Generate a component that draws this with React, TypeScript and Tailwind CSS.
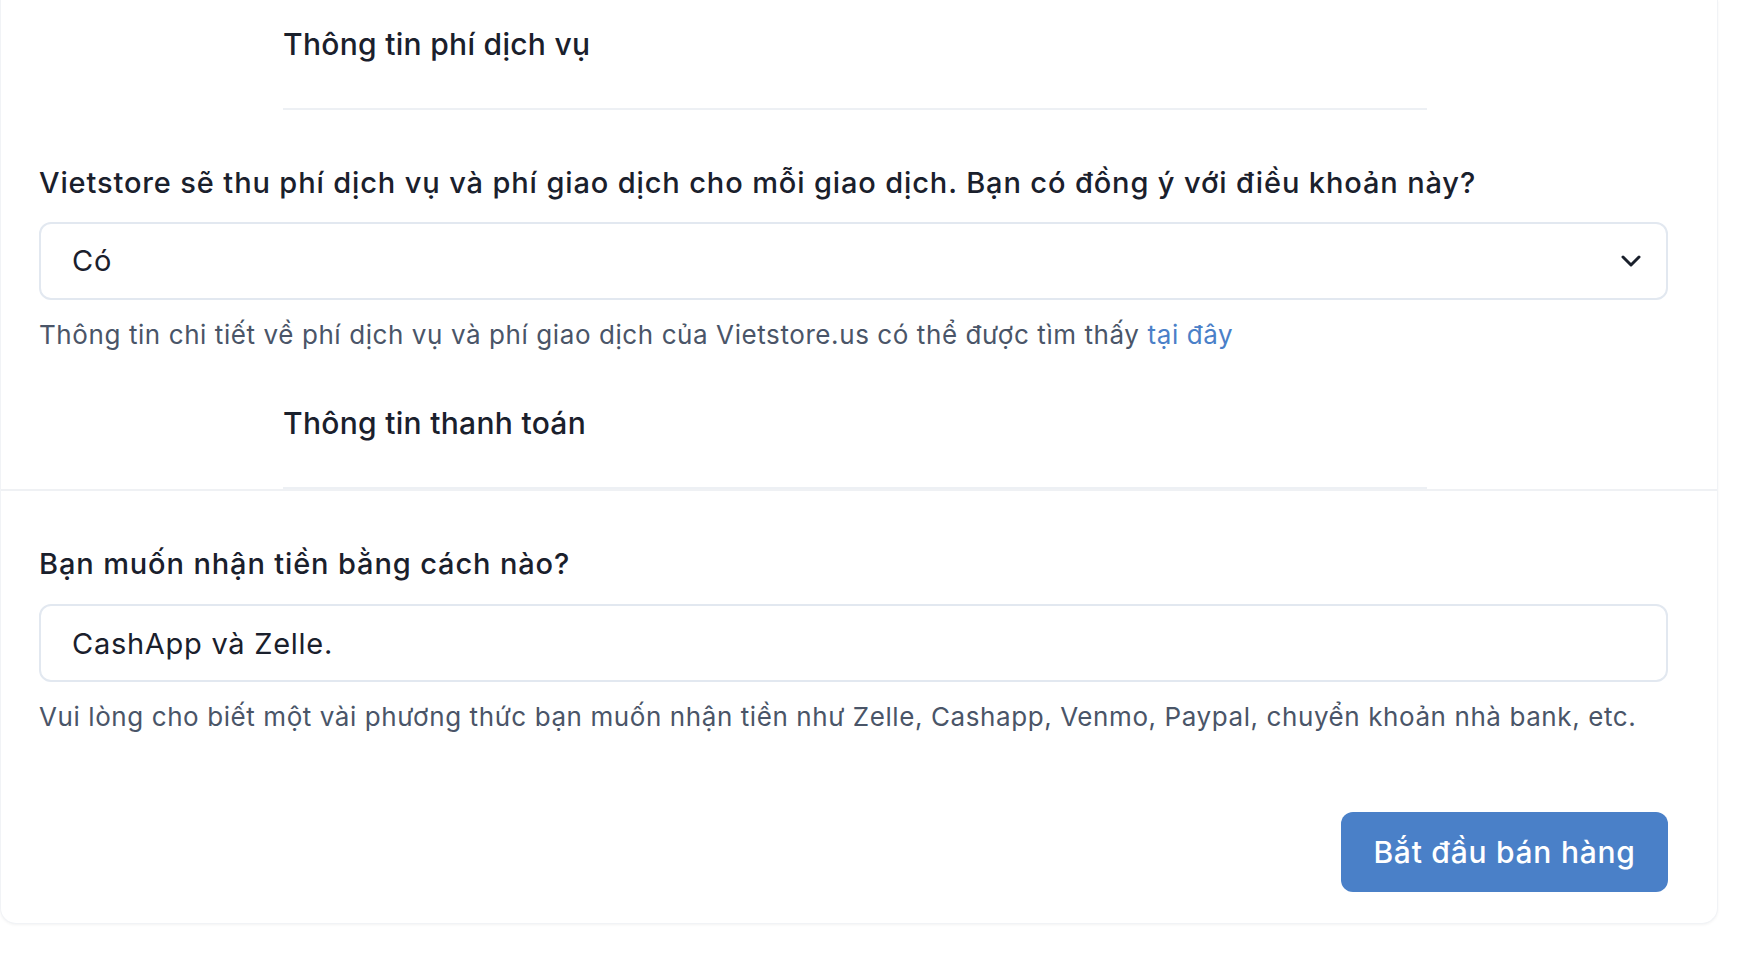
import { useState } from "react";

export default function App() {
  const [agree, setAgree] = useState("Có");
  const [payment, setPayment] = useState("CashApp và Zelle.");

  return (
    <div className="min-h-screen bg-white font-['Inter',sans-serif] text-[#1a202c]">
      <div className="w-[1718px] rounded-b-2xl border border-t-0 border-[#f1f3f6] bg-white pb-[31px] shadow-[0_1px_3px_rgba(0,0,0,0.05)]">
        <div className="ml-[282px] w-[1144px] border-b-2 border-[#edf0f4] pt-[24px] pb-[44px]">
          <h2 className="text-[30px] leading-[40px] font-medium tracking-[0.01em]">Thông tin phí dịch vụ</h2>
        </div>

        <div className="pl-[38px] pr-[49px] pt-[53px]">
          <label className="block text-[29px] leading-[40px] font-medium tracking-[0.03em]">
            Vietstore sẽ thu phí dịch vụ và phí giao dịch cho mỗi giao dịch. Bạn có đồng ý với điều khoản này?
          </label>
          <div className="relative mt-[19px]">
            <select
              value={agree}
              onChange={(e) => setAgree(e.target.value)}
              className="h-[78px] w-full appearance-none rounded-xl border-2 border-[#e2e8f0] bg-white pl-[31px] text-[29px] tracking-[0.025em] text-[#1a202c] outline-none"
            >
              <option>Có</option>
              <option>Không</option>
            </select>
            <svg
              className="pointer-events-none absolute right-[27px] top-[33px] h-[12px] w-[20px]"
              viewBox="0 0 20 12"
              fill="none"
              stroke="#1a202c"
              strokeWidth="3"
              strokeLinecap="round"
              strokeLinejoin="round"
            >
              <polyline points="2,2 10,10 18,2" />
            </svg>
          </div>
          <p className="mt-[17px] text-[26px] leading-[36px] tracking-[0.0225em] text-[#4a5568]">
            Thông tin chi tiết về phí dịch vụ và phí giao dịch của Vietstore.us có thể được tìm thấy{" "}
            <a href="#" className="text-[#4a80c8]">tại đây</a>
          </p>
        </div>

        <div className="ml-[282px] mt-[50px] w-[1144px] border-b-2 border-[#edf0f4] pb-[44px]">
          <h2 className="text-[30px] leading-[40px] font-medium tracking-[0.01em]">Thông tin thanh toán</h2>
        </div>

        <div className="border-t-2 border-[#eff1f4] pl-[38px] pr-[49px] pt-[53px]">
          <label className="block text-[29px] leading-[40px] font-medium tracking-[0.03em]">Bạn muốn nhận tiền bằng cách nào?</label>
          <input
            value={payment}
            onChange={(e) => setPayment(e.target.value)}
            className="mt-[20px] h-[78px] w-full rounded-xl border-2 border-[#e2e8f0] bg-white px-[31px] text-[29px] tracking-[0.025em] text-[#1a202c] outline-none"
          />
          <p className="mt-[17px] text-[26px] leading-[36px] tracking-[0.0225em] text-[#4a5568]">
            Vui lòng cho biết một vài phương thức bạn muốn nhận tiền như Zelle, Cashapp, Venmo, Paypal, chuyển khoản nhà bank, etc.
          </p>
          <div className="mt-[77px] flex justify-end">
            <button className="h-[80px] w-[327px] rounded-xl bg-[#4a80c8] text-[30px] font-medium tracking-[0.025em] text-white">
              Bắt đầu bán hàng
            </button>
          </div>
        </div>
      </div>
    </div>
  );
}
